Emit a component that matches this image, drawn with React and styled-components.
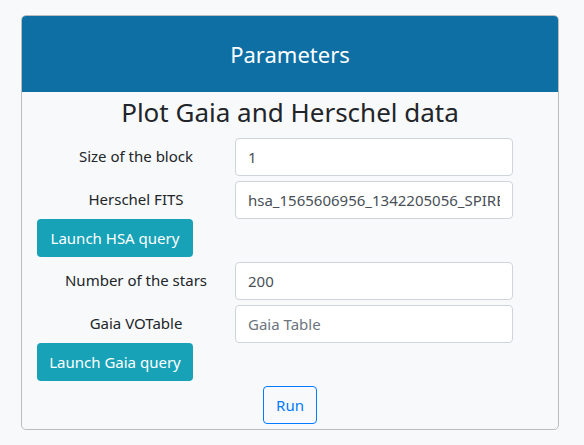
import React from "react";
import styled, { createGlobalStyle } from "styled-components";

const GlobalStyle = createGlobalStyle`
  body {
    margin: 0;
    background: #f8f9fa;
    font-family: "Noto Sans", "Open Sans", sans-serif;
    color: #212529;
  }
`;

const Page = styled.div`
  padding: 15px 26px 0 21px;
`;

const Card = styled.div`
  width: 538px;
  box-sizing: border-box;
  border: 1px solid #bcbcbc;
  border-radius: 5px;
  overflow: hidden;
`;

const Header = styled.div`
  height: 76px;
  background: #0d6fa4;
  color: #fff;
  font-size: 22px;
  display: flex;
  align-items: center;
  justify-content: center;
`;

const Body = styled.div`
  padding: 0 15px 5px;
`;

const Title = styled.h3`
  margin: 0 0 5px;
  font-weight: 400;
  font-size: 26px;
  line-height: 41px;
  text-align: center;
`;

const Row = styled.div`
  display: grid;
  grid-template-columns: 198px 278px;
  align-items: center;
  margin-bottom: ${(p) => (p.$tight ? 0 : 5)}px;
`;

const Label = styled.label`
  font-size: 15px;
  text-align: center;
  padding-bottom: 2px;
`;

const Input = styled.input`
  box-sizing: border-box;
  width: 278px;
  height: 38px;
  padding: 6px 12px;
  border: 1px solid #ced4da;
  border-radius: 4px;
  background: #fff;
  font-family: inherit;
  font-size: 15px;
  color: #495057;
  outline: none;

  &::placeholder {
    color: #6c757d;
  }
`;

const QueryButton = styled.button`
  display: block;
  box-sizing: border-box;
  width: 156px;
  height: 38px;
  margin-bottom: 5px;
  padding: 0;
  border: none;
  border-radius: 4px;
  background: #17a2b8;
  color: #fff;
  font-family: inherit;
  font-size: 15px;
`;

const RunRow = styled.div`
  display: flex;
  justify-content: center;
`;

const RunButton = styled.button`
  box-sizing: border-box;
  width: 54px;
  height: 38px;
  border: 1px solid #007bff;
  border-radius: 4px;
  background: transparent;
  color: #007bff;
  font-family: inherit;
  font-size: 15px;
`;

export default function App() {
  return (
    <Page>
      <GlobalStyle />
      <Card>
        <Header>Parameters</Header>
        <Body>
          <Title>Plot Gaia and Herschel data</Title>
          <Row>
            <Label>Size of the block</Label>
            <Input defaultValue="1" />
          </Row>
          <Row $tight>
            <Label>Herschel FITS</Label>
            <Input defaultValue="hsa_1565606956_1342205056_SPIRE_PSW.fits" />
          </Row>
          <QueryButton>Launch HSA query</QueryButton>
          <Row>
            <Label>Number of the stars</Label>
            <Input defaultValue="200" />
          </Row>
          <Row $tight>
            <Label>Gaia VOTable</Label>
            <Input placeholder="Gaia Table" />
          </Row>
          <QueryButton>Launch Gaia query</QueryButton>
          <RunRow>
            <RunButton>Run</RunButton>
          </RunRow>
        </Body>
      </Card>
    </Page>
  );
}
